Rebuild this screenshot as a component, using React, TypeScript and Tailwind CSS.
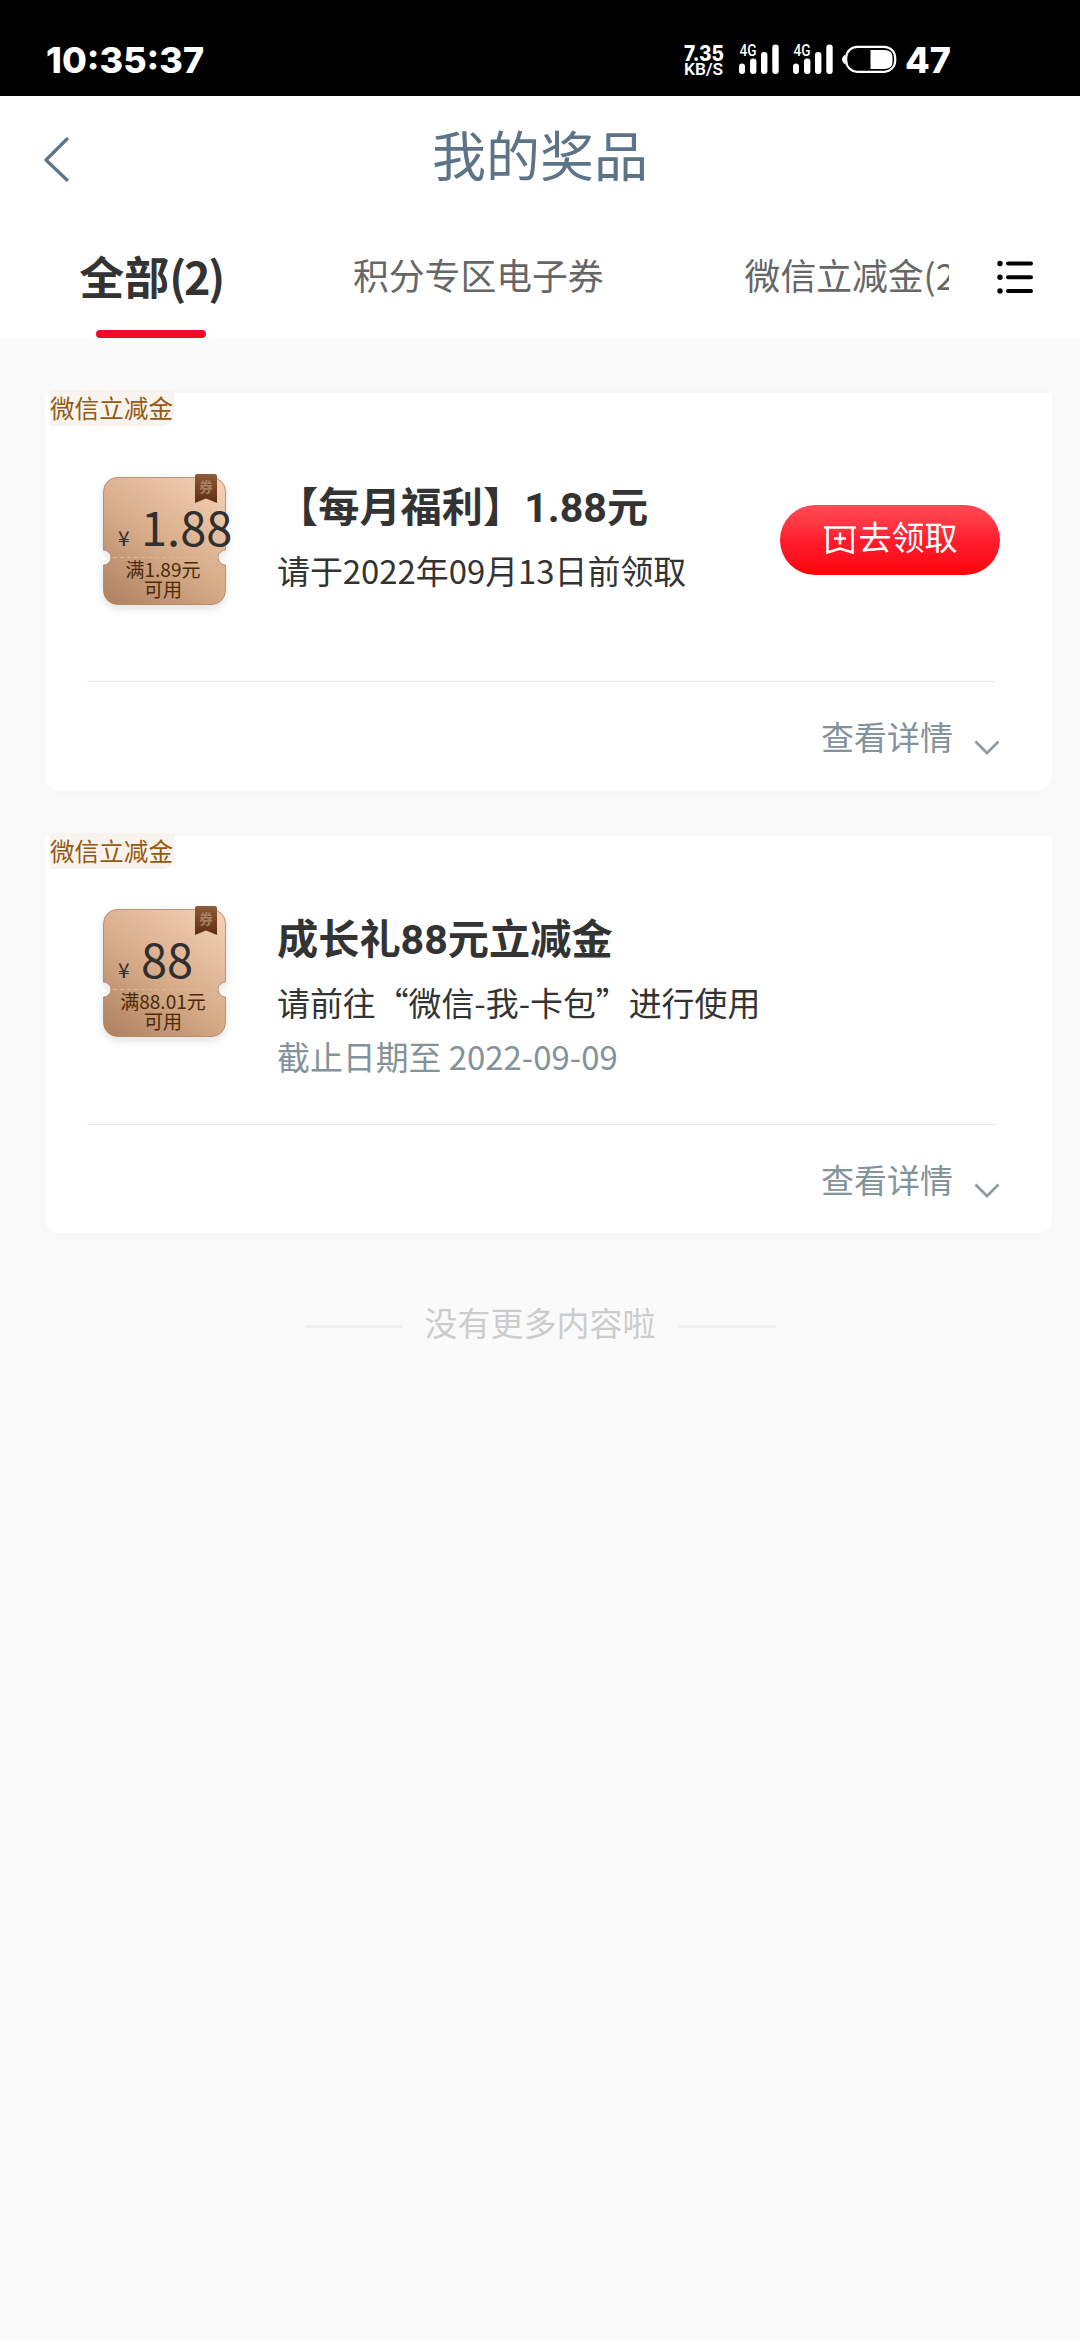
import React from 'react';

interface Prize {
  tag: string;
  amount: string;
  limit: string;
  title: string;
  desc: string;
  expire?: string;
  claimable?: boolean;
}

const prizes: Prize[] = [
  {
    tag: '微信立减金',
    amount: '1.88',
    limit: '满1.89元',
    title: '【每月福利】1.88元',
    desc: '请于2022年09月13日前领取',
    claimable: true,
  },
  {
    tag: '微信立减金',
    amount: '88',
    limit: '满88.01元',
    title: '成长礼88元立减金',
    desc: '请前往“微信-我-卡包”进行使用',
    expire: '截止日期至 2022-09-09',
  },
];

const Signal = () => (
  <svg width="42" height="32" viewBox="0 0 42 32" fill="#fff">
    <text x="0.5" y="13" fontSize="16" fontWeight="500" textLength="17" lengthAdjust="spacingAndGlyphs" className="font-['Roboto',sans-serif]">4G</text>
    <rect x="0" y="20.5" width="6" height="10.5" rx="3" />
    <rect x="11" y="15.5" width="6.4" height="15.5" rx="3" />
    <rect x="22" y="9" width="6.4" height="22" rx="3" />
    <rect x="33.3" y="1.5" width="6.4" height="29.5" rx="3" />
  </svg>
);

const StatusBar = () => (
  <div className="h-24 bg-black text-white flex items-start justify-between pl-[46px] pr-[129px] pt-[42px] font-['Inter',sans-serif]">
    <div className="text-[36px] leading-[36px] font-extrabold">10:35:37</div>
    <div className="flex items-start">
      <svg width="42" height="34" viewBox="0 0 42 34" fill="#fff" className="overflow-visible mr-[14px]">
        <text x="1" y="18.5" fontSize="21" fontWeight="800" textLength="40" lengthAdjust="spacingAndGlyphs">7.35</text>
        <text x="1" y="33" fontSize="17" fontWeight="600" textLength="39" lengthAdjust="spacingAndGlyphs" className="font-['Roboto',sans-serif]">KB/S</text>
      </svg>
      <div className="flex gap-[12px] pt-px">
        <Signal />
        <Signal />
      </div>
      <svg width="56" height="30" viewBox="0 0 56 30" className="ml-[6px] mr-px mt-[2px]">
        <rect x="5.2" y="2.8" width="49" height="25" rx="11" fill="none" stroke="#fff" strokeWidth="2.2" />
        <path d="M4.5 10.5 C0 13 0 18 4.5 20.5 Z" fill="#fff" />
        <path d="M29.500 6 H43 Q51.500 6 51.500 13 V18 Q51.500 25 43 25 H29.500 Z" fill="#fff" />
      </svg>
      <div className="text-[36px] leading-[36px] font-extrabold ml-[7px]">47</div>
    </div>
  </div>
);

const Coupon = ({ amount, limit }: { amount: string; limit: string }) => (
  <div className="relative w-[123px] h-[128px] shrink-0 text-[#4a2a08]">
    <svg width="143" height="148" viewBox="-10 -10 143 148" className="absolute -left-[10px] -top-[10px]">
      <defs>
        <linearGradient id="copper" x1="0.85" y1="0" x2="0.15" y2="1">
          <stop offset="0" stopColor="#f2ceb2" />
          <stop offset="0.55" stopColor="#d6ab88" />
          <stop offset="1" stopColor="#b28564" />
        </linearGradient>
        <linearGradient id="ribbon" x1="0" y1="0" x2="0" y2="1">
          <stop offset="0" stopColor="#8f5b38" />
          <stop offset="1" stopColor="#5c2e10" />
        </linearGradient>
        <filter id="soft" x="-20%" y="-20%" width="140%" height="140%">
          <feDropShadow dx="0" dy="3" stdDeviation="4" floodColor="#000" floodOpacity="0.13" />
        </filter>
      </defs>
      <path
        d="M14.500 .5 H108.500 A14 14 0 0 1 122.500 14.500 V73 A7.500 7.500 0 0 0 122.500 88 V113.500 A14 14 0 0 1 108.500 127.500 H14.500 A14 14 0 0 1 .5 113.500 V88 A7.500 7.500 0 0 0 .5 73 V14.500 A14 14 0 0 1 14.500 .5 Z"
        fill="url(#copper)"
        stroke="#ad815f"
        strokeWidth="0.8"
        filter="url(#soft)"
      />
      <path d="M10 80.500 H113" stroke="#e0b795" strokeWidth="1" strokeDasharray="4 3" />
      <path d="M92 -1 Q92 -3 94 -3 H112 Q114 -3 114 -1 V26 L103 21.500 L92 26 Z" fill="url(#ribbon)" />
      <text x="96" y="15" fontSize="14" fontWeight="700" fill="#a97f63" className="font-['Noto_Sans_CJK_SC',sans-serif]">券</text>
    </svg>
    <div className="relative flex items-baseline pl-[15px] pt-[25px] text-[#303030] whitespace-nowrap">
      <span className="text-[21px] leading-none w-[23px] shrink-0">¥</span>
      <span className="text-[47px] leading-[48px]">{amount}</span>
    </div>
    <div className="relative text-[19px] leading-5 text-center mt-[9px] pr-[3px]">
      <div>{limit}</div>
      <div>可用</div>
    </div>
  </div>
);

const PrizeCard = ({ prize }: { prize: Prize }) => (
  <div className="h-[397px] bg-white rounded-b-[14px] shadow-[0_0_14px_rgba(0,0,0,0.025)] flex flex-col">
    <div className="self-start -mt-[3px] ml-[5px] h-9 w-[124px] bg-[#f9f3f0] rounded-br-[12px] text-[24.6px] leading-[34px] text-[#95590f] whitespace-nowrap">
      {prize.tag}
    </div>
    <div className={`h-[255px] flex pl-[58px] pr-[52px] ${prize.claimable ? 'pt-[51px]' : 'pt-[40px]'}`}>
      <Coupon amount={prize.amount} limit={prize.limit} />
      <div className="flex-1 pl-[51px] pt-px text-[#333] whitespace-nowrap">
        <div className="font-['Roboto','Noto_Sans_CJK_SC',sans-serif] font-bold text-[41.2px] leading-[60px]">{prize.title}</div>
        <div className="text-[32.9px] leading-[54px] mt-[5px]">{prize.desc}</div>
        {prize.expire && <div className="text-[32.9px] leading-[54px] text-[#84929a]">{prize.expire}</div>}
      </div>
      {prize.claimable && (
        <button className="mt-[28px] w-[220px] h-[70px] rounded-full bg-linear-to-b from-[#ff4a56] via-[#ff1c2e] to-[#ff0000] text-white flex items-center justify-center text-[33px] leading-none">
          <svg width="34" height="34" viewBox="0 0 34 34" fill="none" stroke="#fff" strokeWidth="2.6">
            <path d="M1 4.500 H33 M4.500 4.500 V29.500 L17 25.500 L29.500 29.500 V4.500 M11 15.500 H23 M17 9.500 V21.500" />
          </svg>
          <span className="pl-[2px] pb-[7px]">去领取</span>
        </button>
      )}
    </div>
    <div className="h-px ml-[42px] mr-[56px] bg-[#e9ebeb]" />
    <div className="flex justify-end pr-[52px] pt-[29px] text-[33px] leading-[50px] text-[#84929a]">
      <span>查看详情</span>
      <svg width="26" height="16" viewBox="0 0 26 16" fill="none" stroke="#8f9ca3" strokeWidth="2.8" className="ml-[21px] mt-[29px]">
        <path d="M1.500 1.500 L13 13 L24.500 1.500" />
      </svg>
    </div>
  </div>
);

export default function App() {
  return (
    <div className="w-[1080px] h-[2340px] overflow-hidden bg-[#fafafa] font-['Noto_Sans_CJK_SC',sans-serif]">
      <StatusBar />

      <header className="bg-white h-[242px]">
        <div className="h-[116px] flex items-center justify-between px-[44px]">
          <svg width="26" height="46" viewBox="0 0 26 46" fill="none" stroke="#5d7488" strokeWidth="3.2" strokeLinecap="round" strokeLinejoin="round" className="mt-[9px]">
            <path d="M23 3 L2 24 L23 44" />
          </svg>
          <h1 className="text-[54px] leading-[80px] text-[#5d7388]">我的奖品</h1>
          <div className="w-[26px]" />
        </div>
        <nav className="h-[126px] flex text-[35.8px] leading-[54px] text-[#666] whitespace-nowrap">
          <div className="w-[949px] shrink-0 flex overflow-hidden">
            <div className="w-[302px] shrink-0 flex flex-col items-center justify-between pt-[34px]">
              <div className="font-bold text-[45px] leading-[60px] text-[#333]">
                全部<span className="tracking-[-2.3px]">(2)</span>
              </div>
              <div className="w-[110px] h-[8px] rounded-full bg-[#ee0a29]" />
            </div>
            <div className="shrink-0 ml-[51px] pt-[35px]">积分专区电子券</div>
            <div className="shrink-0 ml-[141px] pt-[35px]">微信立减金(2)</div>
          </div>
          <svg width="38" height="36" viewBox="0 0 38 36" className="ml-[47px] mt-[47px]">
            <g stroke="#000" strokeWidth="4" strokeLinecap="round">
              <path d="M12 4.500 H35 M12 18.200 H35 M12 31.900 H35" />
            </g>
            <circle cx="4" cy="4.500" r="2.7" />
            <circle cx="4" cy="18.200" r="2.7" />
            <circle cx="4" cy="31.900" r="2.7" />
          </svg>
        </nav>
      </header>

      <main className="pt-[55px] pl-[45px] pr-[28px] flex flex-col gap-[46px]">
        {prizes.map(p => (
          <PrizeCard key={p.title} prize={p} />
        ))}
      </main>

      <footer className="mt-[64px] flex items-center justify-center gap-[22px] text-[33px] leading-[50px] text-[#ccc]">
        <div className="w-[98px] h-[3px] mt-[8px] bg-[#f0f0f0]" />
        <span>没有更多内容啦</span>
        <div className="w-[98px] h-[3px] mt-[8px] bg-[#f0f0f0]" />
      </footer>
    </div>
  );
}
